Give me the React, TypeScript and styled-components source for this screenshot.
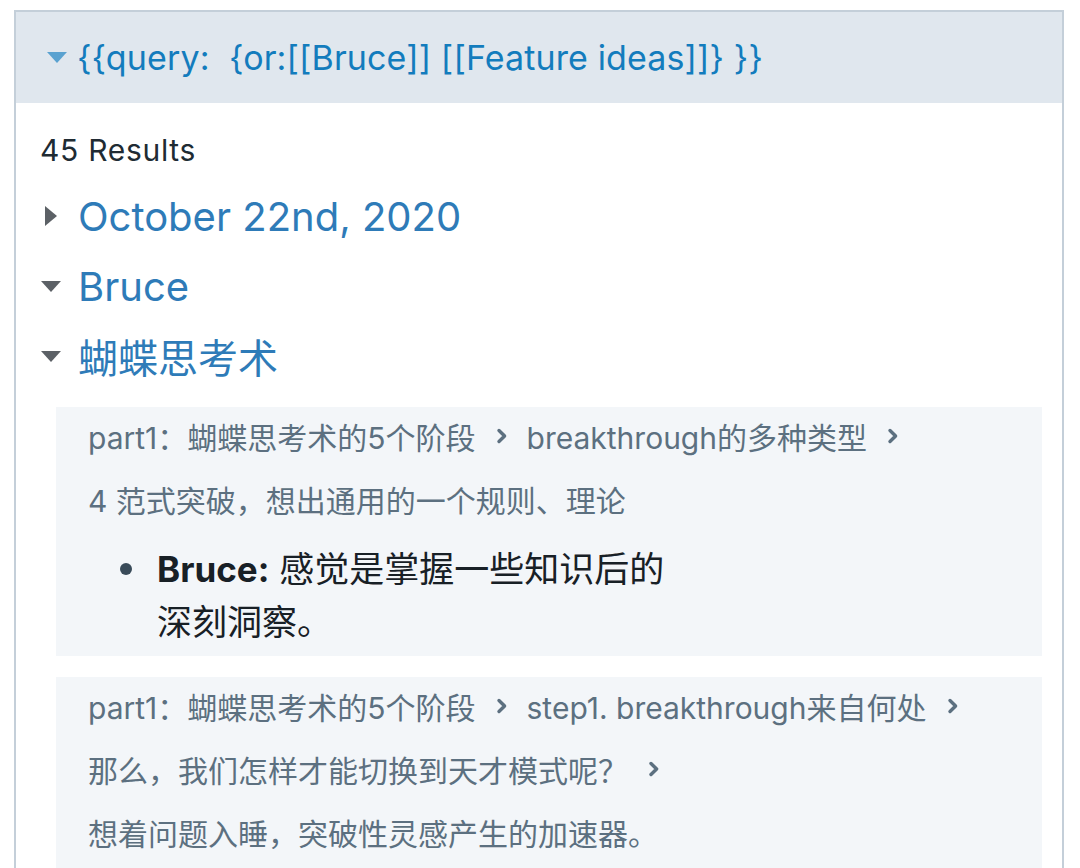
import React from "react";
import styled, { createGlobalStyle } from "styled-components";

const Global = createGlobalStyle`
  * { box-sizing: border-box; }
  html, body { margin: 0; padding: 0; background: #ffffff; }
  body {
    font-family: Inter, "Noto Sans CJK SC", sans-serif;
    -webkit-font-smoothing: antialiased;
  }
`;

const Page = styled.div`
  padding: 10px 16px 0 14px;
  height: 868px;
  overflow: hidden;
`;

const Frame = styled.div`
  border: 2px solid #c4cfd9;
  border-bottom: none;
  min-height: 900px;
`;

const Header = styled.div`
  display: flex;
  align-items: center;
  gap: 10px;
  height: 91px;
  padding-left: 31px;
  background: #e0e7ee;
`;

const Caret = styled.span<{ $dir: "down" | "right"; $color: string; $size: number }>`
  flex: none;
  width: 0;
  height: 0;
  ${(p) =>
    p.$dir === "down"
      ? `border-left: ${p.$size}px solid transparent;
         border-right: ${p.$size}px solid transparent;
         border-top: ${Math.round(p.$size * 1.1)}px solid ${p.$color};`
      : `border-top: ${p.$size}px solid transparent;
         border-bottom: ${p.$size}px solid transparent;
         border-left: ${Math.round(p.$size * 1.2)}px solid ${p.$color};`}
`;

const QueryText = styled.span`
  font-size: 34px;
  color: #137cbd;
  white-space: pre;
  letter-spacing: 0.12px;
`;

const Body = styled.div`
  padding: 22px 20px 0 24px;
`;

const Count = styled.div`
  font-size: 30px;
  color: #202b33;
  line-height: 50px;
  letter-spacing: 0.7px;
  margin-bottom: 6px;
`;

const ResultTitle = styled.div`
  display: flex;
  align-items: center;
  height: 70px;
`;

const CaretSlot = styled.span`
  display: flex;
  justify-content: center;
  align-items: center;
  width: 22px;
  flex: none;
  margin-right: 16px;
`;

const TitleText = styled.span`
  font-size: 40px;
  color: #2e7bb8;
`;

const Block = styled.div`
  margin-left: 16px;
  background: #f3f6f9;
  padding: 0 32px 7px;
  & + & {
    margin-top: 21px;
  }
`;

const Crumb = styled.div`
  display: flex;
  align-items: center;
  flex-wrap: wrap;
  height: 63px;
  padding-bottom: 6px;
  font-size: 30px;
  color: #5c7080;
`;

const Chevron = styled.span`
  display: inline-flex;
  margin: 0 19px 0 20px;
`;

const Bullet = styled.div`
  display: flex;
  margin-top: 10px;
  padding-left: 32px;
`;

const Dot = styled.span`
  flex: none;
  width: 12px;
  height: 12px;
  border-radius: 50%;
  background: #394b59;
  margin-top: 20px;
  margin-right: 25px;
`;

const BulletText = styled.div`
  max-width: 525px;
  font-size: 35px;
  line-height: 53px;
  color: #182026;
  strong {
    font-weight: 700;
  }
`;

const ChevronIcon = () => (
  <svg width="12" height="18" viewBox="0 0 12 18">
    <path d="M3 3.5 L8.6 9 L3 14.5" fill="none" stroke="#5c7080" strokeWidth="3.4" strokeLinecap="round" strokeLinejoin="round" />
  </svg>
);

const CrumbLine: React.FC<{ parts: string[]; trailing?: boolean }> = ({ parts, trailing }) => (
  <Crumb>
    {parts.map((p, i) => (
      <React.Fragment key={i}>
        <span>{p}</span>
        {(i < parts.length - 1 || trailing) && (
          <Chevron>
            <ChevronIcon />
          </Chevron>
        )}
      </React.Fragment>
    ))}
  </Crumb>
);

export default function App() {
  return (
    <>
      <Global />
      <Page>
        <Frame>
          <Header>
            <Caret $dir="down" $color="#5aa2d0" $size={10} />
            <QueryText>{"{{query:  {or:[[Bruce]] [[Feature ideas]]} }}"}</QueryText>
          </Header>
          <Body>
            <Count>45 Results</Count>
            <ResultTitle>
              <CaretSlot>
                <Caret $dir="right" $color="#5c6166" $size={10} />
              </CaretSlot>
              <TitleText>October 22nd, 2020</TitleText>
            </ResultTitle>
            <ResultTitle>
              <CaretSlot>
                <Caret $dir="down" $color="#5c6166" $size={10} />
              </CaretSlot>
              <TitleText>Bruce</TitleText>
            </ResultTitle>
            <ResultTitle>
              <CaretSlot>
                <Caret $dir="down" $color="#5c6166" $size={10} />
              </CaretSlot>
              <TitleText>蝴蝶思考术</TitleText>
            </ResultTitle>
            <div style={{ height: 16 }} />
            <Block>
              <CrumbLine parts={["part1：蝴蝶思考术的5个阶段", "breakthrough的多种类型"]} trailing />
              <CrumbLine parts={["4 范式突破，想出通用的一个规则、理论"]} />
              <Bullet>
                <Dot />
                <BulletText>
                  <strong>Bruce:</strong> 感觉是掌握一些知识后的深刻洞察。
                </BulletText>
              </Bullet>
            </Block>
            <Block>
              <CrumbLine parts={["part1：蝴蝶思考术的5个阶段", "step1. breakthrough来自何处"]} trailing />
              <CrumbLine parts={["那么，我们怎样才能切换到天才模式呢？"]} trailing />
              <CrumbLine parts={["想着问题入睡，突破性灵感产生的加速器。"]} />
            </Block>
          </Body>
        </Frame>
      </Page>
    </>
  );
}
